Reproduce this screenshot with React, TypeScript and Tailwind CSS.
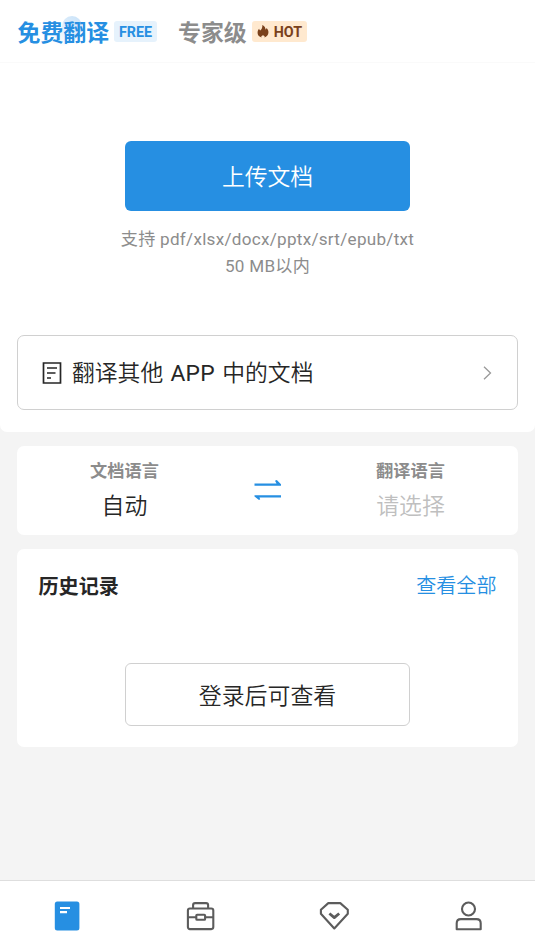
import type { ReactNode } from 'react'

function Header() {
  return (
    <header className="flex h-[63px] items-center border-b border-[#fafafa] pl-[17.5px]">
      <div className="relative flex items-center pt-[5px]">
        <svg className="absolute left-[32px] top-[4px] h-[32px] w-[32px]" viewBox="0 0 32 32">
          <defs>
            <linearGradient id="glow" x1="0.8" y1="0" x2="0.2" y2="1">
              <stop offset="0" stopColor="#cce4f9" />
              <stop offset="1" stopColor="#ffffff" />
            </linearGradient>
          </defs>
          <path d="M22 0A10 10 0 0 1 32 10C32 19 22 30 12 30C6 30 2 29 2 25C2 18 10 17 12 10A10 10 0 0 1 22 0Z" fill="url(#glow)" />
        </svg>
        <span className="relative text-[22.9px] font-bold leading-[34px] text-[#268fe2]">免费翻译</span>
      </div>
      <span className="ml-[5px] flex h-[21px] w-[43px] items-center justify-center rounded-[3px] bg-[#e6f2fc] pt-[3px] text-[14.3px] font-bold text-[#268fe2]">
        FREE
      </span>
      <span className="ml-[21px] pt-[5px] text-[22.9px] font-bold leading-[34px] text-[#8c8c8c]">专家级</span>
      <span className="ml-[5px] flex h-[21px] w-[55px] items-center gap-[5px] rounded-[3px] bg-[#ffe9cf] pl-[5px] text-[14.3px] font-bold text-[#7a411b]">
        <svg className="mt-px h-[13px] w-[12px]" viewBox="0 0 12 13" fill="currentColor">
          <path d="M5.3 0C8 1.3 8.6 3 8.4 4.6C9.1 4.3 9.4 3.7 9.5 3C10.9 4.3 11.7 6 11.4 8C11.1 10 9.7 11.8 7.4 12.5C8.1 11.6 7.6 11 6 10.3C4.4 11 3.9 11.6 4.6 12.5C2.3 11.8.8 10.2.6 8.2C.4 6.3 1.3 4.8 2.1 3.8C2.3 4.7 2.6 5.2 3.2 5.6C4.8 4.1 5.6 2.4 5.3 0Z" />
        </svg>
        <span className="pt-[3px]">HOT</span>
      </span>
    </header>
  )
}

function UploadSection() {
  return (
    <section className="h-[432px] rounded-b-[7px] bg-white">
      <Header />
      <div className="flex flex-col items-center px-[17px] pt-[78.4px]">
        <button className="h-[70px] w-[285px] rounded-[6px] bg-[#268fe2] pt-[4px] text-[22.8px] font-[350] text-white">
          上传文档
        </button>
        <p className="mt-[14.6px] text-center text-[17.1px] leading-[27px] tracking-[0.28px] text-[#8c8c8c]">
          支持 pdf/xlsx/docx/pptx/srt/epub/txt
          <br />
          50 MB以内
        </p>
        <button className="mt-[55px] flex h-[75px] w-full items-center rounded-[7px] border border-[#d0d0d0] pl-[24px] pr-[25px] text-[22.8px] text-[#262626]">
          <svg className="mt-[2px] h-[22px] w-[20px]" viewBox="0 0 20 22" fill="none" stroke="currentColor" strokeWidth="1.7">
            <path d="M1.5 1h17v20h-17zM5 6h10M5 11h8.5M5 16h4" />
          </svg>
          <span className="ml-[10px] pt-[4px] font-[350] [word-spacing:1.7px]">
            翻译其他 <span className="font-normal tracking-[0.3px]">APP</span> 中的文档
          </span>
          <svg className="ml-auto mt-[2px] h-[14px] w-[9px]" viewBox="0 0 9 14" fill="none" stroke="#999999" strokeWidth="1.3">
            <path d="M1 .7L7.5 7L1 13.3" />
          </svg>
        </button>
      </div>
    </section>
  )
}

function Language({ label, children }: { label: string; children: ReactNode }) {
  return (
    <div className="flex w-[215px] flex-col items-center">
      <span className="text-[17.2px] font-bold leading-[26px] text-[#8c8c8c]">{label}</span>
      <span className="mt-[6px] text-[22.9px] font-[350] leading-[34px]">{children}</span>
    </div>
  )
}

function LanguageCard() {
  return (
    <section className="mx-[17px] mt-[14px] flex h-[89px] justify-between rounded-[7px] bg-white pt-[12px]">
      <Language label="文档语言">
        <span className="text-[#262626]">自动</span>
      </Language>
      <svg className="mt-[21px] h-[22px] w-[28px]" viewBox="0 0 28 22" fill="#268fe2">
        <path d="M.5 4.6H22.5L21 1.8L22.8 1L27 5.2V6.8H.5ZM27 16.3H.5V17.6L5 21L6.2 20.2L5.4 18.4H27Z" />
      </svg>
      <Language label="翻译语言">
        <span className="text-[#bfbfbf]">请选择</span>
      </Language>
    </section>
  )
}

function HistoryCard() {
  return (
    <section className="mx-[17px] mt-[14px] flex h-[198px] flex-col items-center rounded-[7px] bg-white px-[21.5px] pt-[22px]">
      <div className="flex h-[31px] w-full items-start justify-between text-[20.1px]">
        <h2 className="font-bold leading-[33px] text-[#262626]">历史记录</h2>
        <a className="font-[350] leading-[30px] text-[#268fe2]">查看全部</a>
      </div>
      <button className="mt-[61px] h-[63px] w-[285px] shrink-0 rounded-[6px] border border-[#d0d0d0] pt-[5px] text-[22.9px] font-[350] text-[#262626]">
        登录后可查看
      </button>
    </section>
  )
}

function TabBar() {
  return (
    <nav className="mt-auto grid h-[71px] grid-cols-4 justify-items-center border-t border-[#dedede] bg-white pt-[19px] text-[#5c5c5c]">
      <svg className="h-[32px] w-[32px]" viewBox="0 0 32 32">
        <rect x="3.8" y="1.6" width="24.6" height="29" rx="2.5" fill="#268fe2" />
        <path d="M9 8h10M9 12.2h7" stroke="#fff" strokeWidth="2.2" />
      </svg>
      <svg className="h-[32px] w-[32px]" viewBox="0 0 32 32" fill="none" stroke="currentColor" strokeWidth="2.1">
        <rect x="2.9" y="8.5" width="25.4" height="20.6" rx="2" />
        <path d="M8.1 8.2V5Q8.1 3.1 10.1 3.1H21.1Q23.1 3.1 23.1 5V8.2M3 17.2H11M20 17.2H28" />
        <rect x="11.3" y="14.8" width="8.8" height="5" rx=".8" />
      </svg>
      <svg className="h-[32px] w-[32px]" viewBox="0 0 32 32" fill="none" stroke="currentColor" strokeWidth="2.1" strokeLinejoin="round">
        <path d="M10.3 3.1H22.3L29.8 9.8V13.8L16.3 28.5L2.9 13.8V9.8Z" />
        <path d="M11.4 13.5L16.3 17.6L21.2 13.5" strokeWidth="2.8" />
      </svg>
      <svg className="h-[32px] w-[32px]" viewBox="0 0 32 32" fill="none" stroke="currentColor" strokeWidth="2.1">
        <circle cx="16.5" cy="9" r="6.5" />
        <path d="M4.7 29.3V23.3Q4.7 19.1 8.9 19.1H24.5Q28.7 19.1 28.7 23.3V29.3Z" strokeLinejoin="round" />
      </svg>
    </nav>
  )
}

export default function App() {
  return (
    <main className="flex h-[951px] w-[535px] flex-col overflow-hidden bg-[#f4f4f4] font-[Roboto,'Noto_Sans_CJK_SC',sans-serif]">
      <UploadSection />
      <LanguageCard />
      <HistoryCard />
      <TabBar />
    </main>
  )
}
